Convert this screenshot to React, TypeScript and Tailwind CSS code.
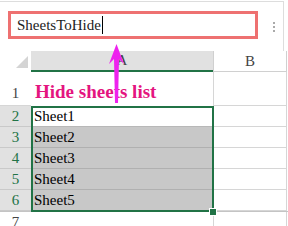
import React from 'react';

const sheets = ['Sheet1', 'Sheet2', 'Sheet3', 'Sheet4', 'Sheet5'];

const GridRow: React.FC<{ num: number; text: string; active: boolean }> = ({ num, text, active }) => (
    <div className="flex h-[21px]">
        <div className="w-[31px] flex items-end justify-center bg-[#e1e1e1] border-b border-[#c9c9c9] text-[15px] leading-[19px] text-[#217346]">
            {num}
        </div>
        <div
            className={
                active
                    ? 'w-[182px] flex items-end pl-[3px] bg-white border-b border-[#b8b8b8] text-[15px] leading-[19px] text-black'
                    : 'w-[182px] flex items-end pl-[3px] bg-[#c8c8c8] border-b border-[#b0b0b0] text-[15px] leading-[19px] text-black'
            }
        >
            {text}
        </div>
        <div className="w-[74px] border-l border-r border-b border-[#d6d6d6]" />
    </div>
);

export default function App() {
    return (
        <div className="relative w-[288px] h-[226px] overflow-hidden bg-white font-['Liberation_Serif',serif]">
            {/* name box bar */}
            <div className="mt-px h-[50px] border-t border-r border-[#dddddd] w-[284px] flex items-start">
                <div className="mt-[9px] ml-[8px] w-[250px] h-[28px] border-[3px] border-[#ee7171] flex items-center pl-[6px]">
                    <span className="text-[15px] leading-[18px] text-[#222]">SheetsToHide</span>
                    <span className="ml-px w-px h-[18px] bg-black" />
                </div>
                <div className="mt-[20px] ml-[15px] flex flex-col gap-[2px]">
                    <span className="w-[2px] h-[2px] bg-[#aaaaaa]" />
                    <span className="w-[2px] h-[2px] bg-[#aaaaaa]" />
                    <span className="w-[2px] h-[2px] bg-[#aaaaaa]" />
                </div>
            </div>

            {/* column headers */}
            <div className="flex h-[21px]">
                <div className="w-[31px] flex items-end justify-end pr-[3px] pb-[4px]">
                    <svg width="12" height="12" viewBox="0 0 12 12">
                        <polygon points="12,0 12,12 0,12" fill="#d4d4d4" />
                    </svg>
                </div>
                <div className="w-[182px] bg-[#e1e1e1] border-b-2 border-[#217346] text-center text-[15px] leading-[19px] text-[#444]">
                    A
                </div>
                <div className="w-[74px] border-l border-r border-b border-[#d0d0d0] text-center text-[15px] leading-[20px] text-[#444]">
                    B
                </div>
            </div>

            {/* row 1 */}
            <div className="flex h-[34px]">
                <div className="w-[31px] flex items-end justify-center pb-[2px] border-b border-[#d6d6d6] text-[15px] leading-[19px] text-[#444]">
                    1
                </div>
                <div className="w-[182px] flex items-end pl-[4px] pb-[4px] whitespace-nowrap text-[19px] leading-[20px] font-bold text-[#e4157f]">
                    Hide sheets list
                </div>
                <div className="w-[74px] border-l border-r border-b border-[#d6d6d6]" />
            </div>

            {sheets.map((s, i) => (
                <GridRow key={s} num={i + 2} text={s} active={i === 0} />
            ))}

            {/* row 7 */}
            <div className="flex h-[21px] border-t border-[#c4c4c4]">
                <div className="w-[31px] flex items-end justify-center text-[15px] leading-[19px] text-[#444]">7</div>
                <div className="w-[182px]" />
                <div className="w-[74px] border-l border-r border-[#d6d6d6]" />
            </div>

            {/* selection */}
            <div className="absolute left-[31px] top-[106px] w-[183px] h-[106px] border-2 border-[#217346] pointer-events-none" />
            <div className="absolute left-[209px] top-[208px] w-[8px] h-[8px] bg-[#217346] border border-white" />

            {/* arrow */}
            <svg className="absolute left-[106px] top-[42px]" width="22" height="64" viewBox="0 0 22 64">
                <polygon points="10.5,2 18,22 13,17 12,61 9,61 8,17 3,22" fill="#ee22ee" />
            </svg>
        </div>
    );
}
